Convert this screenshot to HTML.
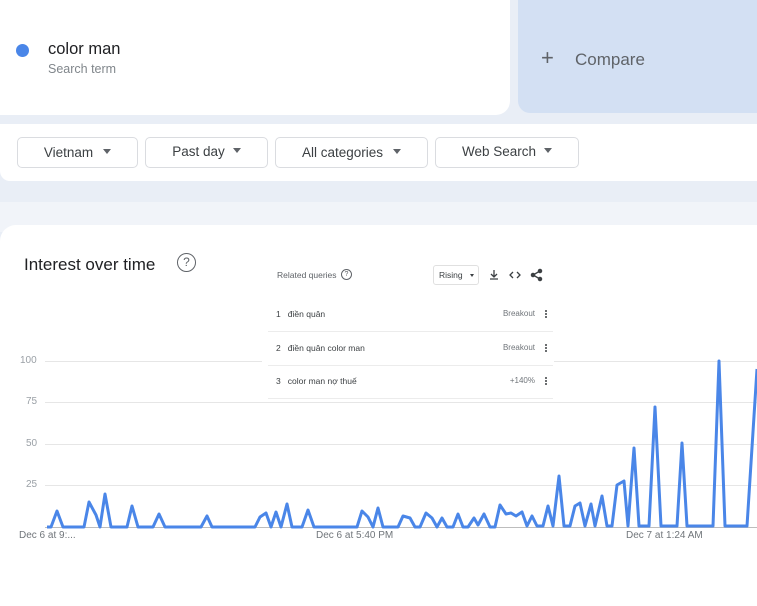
<!DOCTYPE html>
<html><head><meta charset="utf-8"><style>
*{margin:0;padding:0;box-sizing:border-box}
body{width:757px;height:606px;overflow:hidden;background:#e9eef6;font-family:"Liberation Sans",sans-serif;position:relative}
.a{position:absolute}
.btn{position:absolute;top:137px;height:31px;border:1px solid #dadce0;border-radius:5px;background:#fff;color:#3c4043;font-size:13.5px;line-height:29px;text-align:center}
.tri{display:inline-block;width:0;height:0;border-left:4.5px solid transparent;border-right:4.5px solid transparent;border-top:5px solid #5f6368;vertical-align:middle;margin-left:10px;margin-top:-3px}
.row{position:absolute;left:276px;width:276px;font-size:8.5px;color:#3c4043}
.dots{position:absolute;left:545px;width:2px}
.dots i{display:block;width:2px;height:2px;background:#3c4043;margin-bottom:1.2px;border-radius:1px}
.ax{position:absolute;font-size:10px;color:#9aa0a6}
</style></head><body>
<div class="a" style="left:0;top:0;width:510px;height:115px;background:#fff;border-radius:0 0 14px 0"></div>
<div class="a" style="left:16px;top:44px;width:13px;height:13px;border-radius:50%;background:#4a86e8"></div>
<div class="a" style="left:48px;top:40px;font-size:16.5px;color:#202124">color man</div>
<div class="a" style="left:48px;top:62px;font-size:12.5px;color:#80868b">Search term</div>
<div class="a" style="left:518px;top:0;width:239px;height:113px;background:#d3e0f3;border-radius:0 0 0 12px"></div>
<div class="a" style="left:541px;top:46px;font-size:22px;color:#5f6368;line-height:24px;font-weight:300">+</div>
<div class="a" style="left:575px;top:50px;font-size:17px;color:#5f6368">Compare</div>
<div class="a" style="left:0;top:124px;width:757px;height:57px;background:#fff;border-radius:0 0 0 10px"></div>
<div class="btn" style="left:17px;width:121px">Vietnam<span class="tri"></span></div>
<div class="btn" style="left:145px;width:123px;line-height:27px">Past day<span class="tri" style="margin-left:8px"></span></div>
<div class="btn" style="left:275px;width:153px">All categories<span class="tri"></span></div>
<div class="btn" style="left:435px;width:144px;line-height:27px">Web Search<span class="tri" style="margin-left:8px"></span></div>
<div class="a" style="left:0;top:202px;width:757px;height:30px;background:#f1f4f9"></div>
<div class="a" style="left:0;top:225px;width:757px;height:381px;background:#fff;border-radius:16px 0 0 0"></div>
<div class="a" style="left:24px;top:255px;font-size:17px;color:#202124">Interest over time</div>
<div class="a" style="left:177px;top:253px;width:19px;height:19px;border:1.5px solid #5f6368;border-radius:50%;font-size:12px;color:#5f6368;text-align:center;line-height:16px">?</div>
<svg class="a" style="left:0;top:0" width="757" height="606">
<g stroke="#e6e6e6" stroke-width="1">
<line x1="45" y1="361.5" x2="757" y2="361.5"/><line x1="45" y1="402.5" x2="757" y2="402.5"/>
<line x1="45" y1="444.5" x2="757" y2="444.5"/><line x1="45" y1="485.5" x2="757" y2="485.5"/>
<line x1="45" y1="527.5" x2="757" y2="527.5" stroke="#bdbdbd"/></g>
<polyline fill="none" stroke="#4a86e8" stroke-width="3" stroke-linejoin="round" points="47,527 51,527 57,511 63,527 84,527 89,502 96,515 100,527 105,494 111,527 127,527 132,506 138,527 153,527 159,514 165,527 201,527 207,516 212,527 255,527 260,517 266,513 271,527 276,512 281,527 287,504 292,527 302,527 308,510 314,527 357,527 362,511 368,517 373,527 378,508 383,527 398,527 403,516 410,518 415,527 420,527 426,513 432,518 437,527 442,518 447,527 453,527 458,514 463,527 468,527 474,518 478,525 484,514 490,527 495,527 500,505 506,514 511,513 516,516 522,512 527,526 532,516 537,526 543,526 548,506 553,526 559,476 564,526 570,526 575,506 580,503 585,526 591,504 595,526 602,496 607,526 612,526 617,485 624,481 628,526 634,448 639,526 649,526 655,407 661,526 677,526 682,443 687,526 713,526 719,361 725,526 747,526 757,369"/>
</svg>
<div class="ax" style="left:20px;top:355px">100</div>
<div class="ax" style="left:26px;top:396px">75</div>
<div class="ax" style="left:26px;top:438px">50</div>
<div class="ax" style="left:26px;top:479px">25</div>
<div class="ax" style="left:19px;top:530px;color:#70757a">Dec 6 at 9:...</div>
<div class="ax" style="left:316px;top:530px;color:#70757a">Dec 6 at 5:40 PM</div>
<div class="ax" style="left:626px;top:530px;color:#70757a">Dec 7 at 1:24 AM</div>
<div class="a" style="left:262px;top:256px;width:292px;height:144px;background:#fff"></div>
<div class="a" style="left:277px;top:270px;font-size:8.5px;color:#5f6368">Related queries</div>
<div class="a" style="left:341px;top:269px;width:11px;height:11px;border:1px solid #5f6368;border-radius:50%;font-size:7px;color:#5f6368;text-align:center;line-height:9px">?</div>
<div class="a" style="left:433px;top:265px;width:46px;height:20px;border:1px solid #e0e0e0;border-radius:3px;font-size:8.5px;color:#3c4043;line-height:18px;padding-left:5px">Rising<span style="display:inline-block;border-left:2.5px solid transparent;border-right:2.5px solid transparent;border-top:3px solid #3c4043;margin-left:7px;vertical-align:middle"></span></div>
<svg class="a" style="left:488px;top:268px" width="58" height="14" fill="none" stroke="#3c4043" stroke-width="1.3">
<path d="M6 2v7M3 6l3 3 3-3M2 11h8"/>
<path d="M25 4l-3 3 3 3M29 4l3 3-3 3"/>
<circle cx="52" cy="3" r="1.6" fill="#3c4043"/><circle cx="45" cy="7" r="1.6" fill="#3c4043"/><circle cx="52" cy="11" r="1.6" fill="#3c4043"/><path d="M52 3L45 7 52 11"/>
</svg>
<div class="row" style="top:309px">1&nbsp;&nbsp;&nbsp;điền quân<span style="position:absolute;right:17px;font-size:8px;color:#70757a">Breakout</span></div>
<div class="dots" style="top:310px"><i></i><i></i><i></i></div>
<div class="a" style="left:268px;top:331px;width:285px;height:1px;background:#ececec"></div>
<div class="row" style="top:343px">2&nbsp;&nbsp;&nbsp;điền quân color man<span style="position:absolute;right:17px;font-size:8px;color:#70757a">Breakout</span></div>
<div class="dots" style="top:344px"><i></i><i></i><i></i></div>
<div class="a" style="left:268px;top:365px;width:285px;height:1px;background:#ececec"></div>
<div class="row" style="top:376px">3&nbsp;&nbsp;&nbsp;color man nợ thuế<span style="position:absolute;right:17px;font-size:8px;color:#70757a">+140%</span></div>
<div class="dots" style="top:377px"><i></i><i></i><i></i></div>
<div class="a" style="left:268px;top:398px;width:285px;height:1px;background:#ececec"></div>
</body></html>
